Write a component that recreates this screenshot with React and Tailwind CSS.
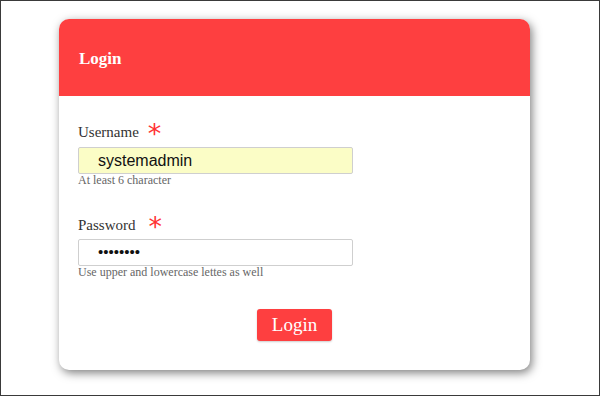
export default function App() {
  const serif = { fontFamily: '"Liberation Serif", "Times New Roman", serif' };
  return (
    <div className="w-[600px] h-[396px] bg-white border border-[#3a3a3a] box-border pl-[58px] pt-[18px]" style={serif}>
      <div className="w-[471px] h-[351px] bg-white rounded-[10px] shadow-[2px_3px_10px_rgba(0,0,0,0.5)] flex flex-col overflow-hidden">
        <div className="h-[77px] bg-[#fe3f40] flex items-center pl-[20px] pt-[1px]">
          <span className="text-white font-bold text-[17px] leading-none">Login</span>
        </div>
        <div className="flex flex-col pl-[19px] pt-[26px]">
          <div className="flex items-start h-[20px] text-[15px] leading-[20px] text-[#333]">
            <span>Username</span>
            <span className="ml-[9px] text-[#f33] text-[27px] leading-none relative -top-[2px]" style={{ fontFamily: '"DejaVu Sans", sans-serif' }}>*</span>
          </div>
          <div className="mt-[5px] w-[275px] h-[27px] bg-[#fbfdc6] border border-[#cfcfcf] rounded-[2px] flex items-center pl-[19px] text-[16px] text-[#111]" style={{ fontFamily: '"Liberation Sans", Arial, sans-serif' }}>
            systemadmin
          </div>
          <div className="text-[12px] leading-[13px] text-[#666]">At least 6 character</div>
          <div className="mt-[28px] flex items-start h-[20px] text-[15px] leading-[20px] text-[#333]">
            <span>Password</span>
            <span className="ml-[13px] text-[#f33] text-[27px] leading-none relative -top-[2px]" style={{ fontFamily: '"DejaVu Sans", sans-serif' }}>*</span>
          </div>
          <div className="mt-[4px] w-[275px] h-[27px] bg-white border border-[#cfcfcf] rounded-[2px] flex items-center pl-[19px] text-[15px] text-[#111]" style={{ fontFamily: '"Liberation Sans", Arial, sans-serif' }}>
            ••••••••
          </div>
          <div className="text-[12px] leading-[13px] text-[#666]">Use upper and lowercase lettes as well</div>
        </div>
        <div className="flex justify-center mt-[30px]">
          <button className="h-[32px] w-[75px] bg-[#fe3f40] text-white text-[19px] rounded-[3px] shadow-[0_1px_2px_rgba(0,0,0,0.2)] flex items-center justify-center" style={serif}>
            Login
          </button>
        </div>
      </div>
    </div>
  );
}
